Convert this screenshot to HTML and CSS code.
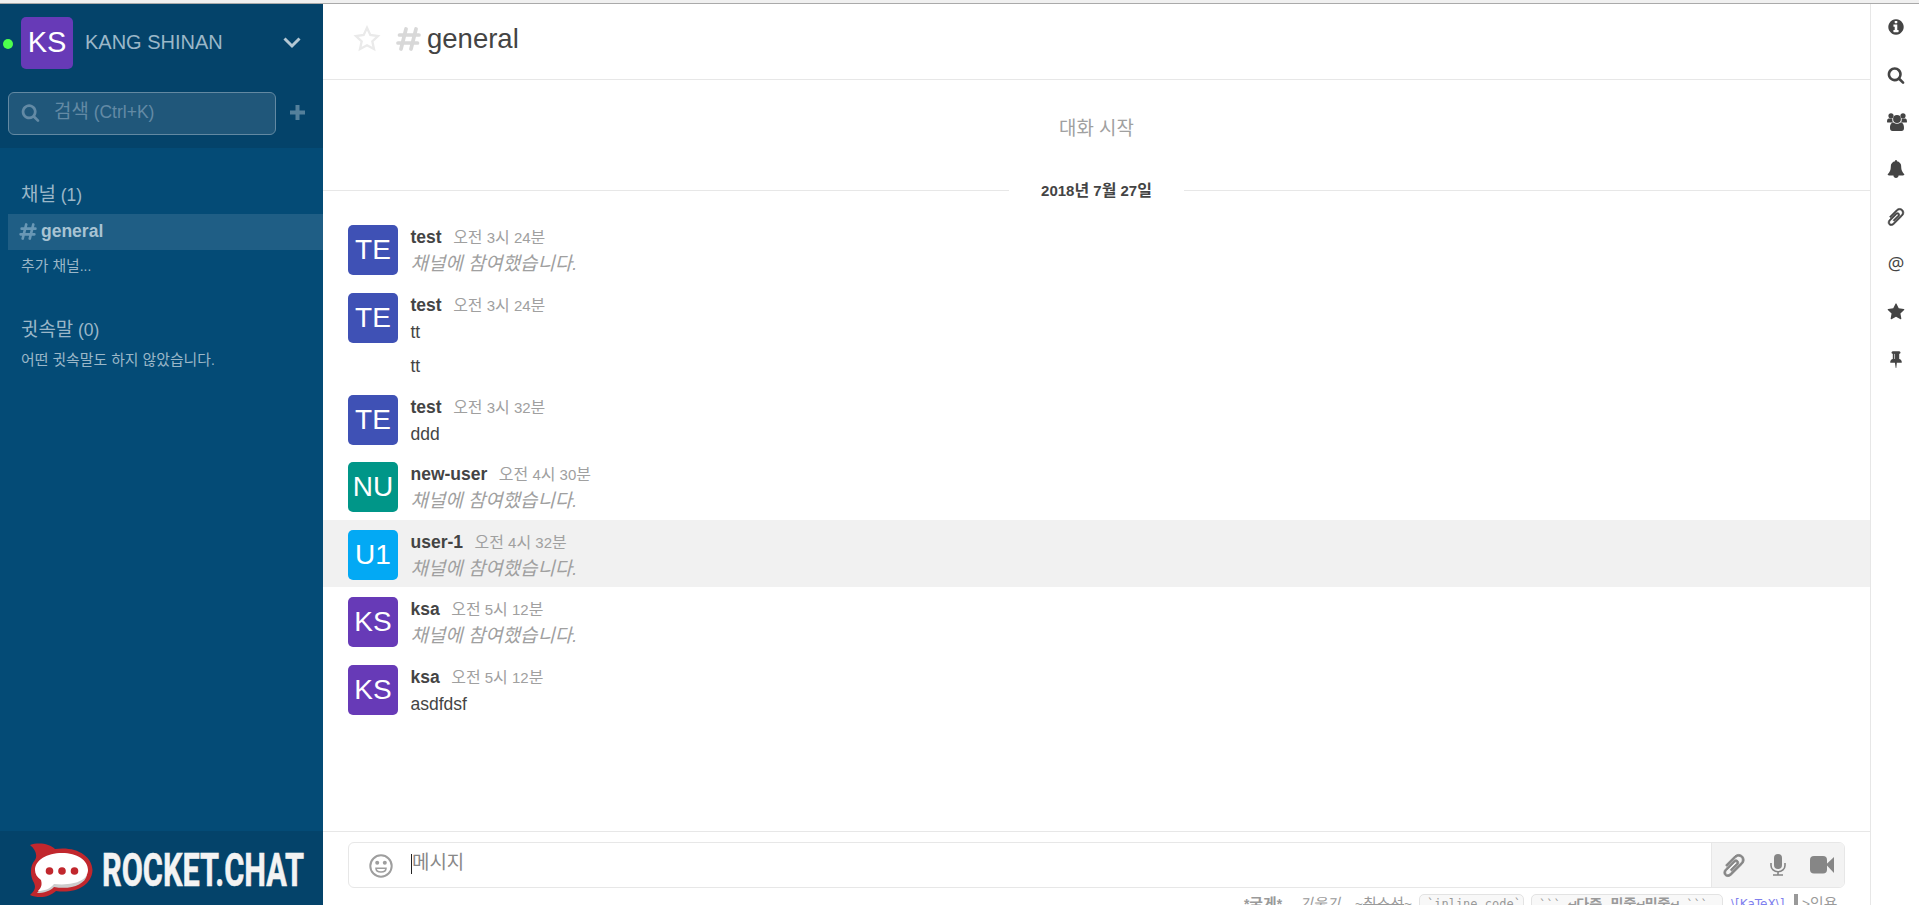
FILE: index.html
```html
<!DOCTYPE html>
<html lang="ko">
<head>
    <meta charset="UTF-8">
    <meta name="viewport" content="width=device-width, initial-scale=1.0">
    <title>general</title>
    <link rel="stylesheet" href="styles.css">
</head>
<body>
    <!-- shared icons -->
    <svg class="defs" width="0" height="0">
        <symbol id="icon-search" viewBox="0 0 1792 1792"><path d="M1216 832q0-185-131.5-316.5t-316.5-131.5-316.5 131.5-131.5 316.5 131.5 316.5 316.5 131.5 316.5-131.5 131.5-316.5zm512 832q0 52-38 90t-90 38q-54 0-90-38l-343-342q-179 124-399 124-143 0-273.5-55.5t-225-150-150-225-55.5-273.5 55.5-273.5 150-225 225-150 273.5-55.5 273.5 55.5 225 150 150 225 55.5 273.5q0 220-124 399l343 343q37 37 37 90z"/></symbol>
        <symbol id="icon-clip" viewBox="0 0 1792 1792"><path stroke="currentColor" stroke-width="60" transform="translate(1792 0) scale(-1 1)" d="M1596 1385q0 117-79 196t-196 79q-135 0-235-100l-777-776q-113-115-113-271 0-159 110-270t269-111q158 0 273 113l605 606q10 10 10 22 0 16-30.5 46.5t-46.5 30.5q-13 0-23-10l-606-607q-79-77-181-77-106 0-179 75t-73 181q0 105 76 181l776 777q63 63 145 63 64 0 106-42t42-106q0-82-63-145l-581-581q-26-24-60-24-29 0-48 19t-19 48q0 32 25 59l410 410q10 10 10 22 0 16-31 47t-47 31q-12 0-22-10l-410-410q-63-61-63-149 0-82 57-139t139-57q88 0 149 63l581 581q100 98 100 235z"/></symbol>
        <symbol id="icon-hash" viewBox="0 0 25 24"><path d="M10 2L5 22M20 2L15 22M3.5 8H23M2 16H21.500" fill="none" stroke="currentColor" stroke-width="3.7" stroke-linecap="round"/></symbol>
    </svg>

    <div class="top-strip"></div>
    <div class="app">
        <aside class="sidebar">
            <div class="side-header">
                <div class="account">
                    <span class="status"></span>
                    <span class="avatar avatar-me">KS</span>
                    <span class="account-name">KANG SHINAN</span>
                    <svg class="chevron" viewBox="0 0 18 12"><path d="M1.500 1.500L9 9L16.500 1.500" fill="none" stroke="currentColor" stroke-width="3"/></svg>
                </div>
                <div class="search-row">
                    <div class="search-box">
                        <svg class="search-icon"><use href="#icon-search"/></svg>
                        <span><span class="ko">검색</span> (Ctrl+K)</span>
                    </div>
                    <svg class="plus" viewBox="0 0 15 15"><path d="M5.500 0h4v5.500H15v4H9.500V15h-4V9.500H0v-4h5.500z"/></svg>
                </div>
            </div>
            <div class="rooms">
                <h3><span class="ko">채널</span> (1)</h3>
                <a class="room"><svg class="room-hash"><use href="#icon-hash"/></svg>general</a>
                <p class="more"><span class="ko">추가 채널</span>...</p>
                <h3 class="direct"><span class="ko">귓속말</span> (0)</h3>
                <p class="empty"><span class="ko">어떤 귓속말도 하지 않았습니다</span>.</p>
            </div>
            <div class="side-footer">
                <svg class="logo" viewBox="0 0 280 56">
                    <path fill="#c1272d" d="M0 2C9-1 20 1 25 6C45 3 62 12 62.500 27C62 43 44 51 26 48C20 54 9 56 0 52C6 47 6 43 3 38C0 32 0 22 5 17C8 12 5 6 0 2Z"/>
                    <path fill="#ccc" d="M15 40L7 50C14 50 20 48 24 44C40 47 55 42 57 32Z"/>
                    <path fill="#fff" d="M32 10C47 10 58 17 58 27C58 37 45 43 24 41C20 46 14 48 8 48C12 44 12 41 11 37C7 34 5 31 5 27C5 17 17 10 32 10Z"/>
                    <circle cx="19.500" cy="28" r="3.8" fill="#c1272d"/><circle cx="32" cy="28" r="3.800" fill="#c1272d"/><circle cx="44.500" cy="28" r="3.800" fill="#c1272d"/>
                    <text class="logo-text" x="72" y="43" textLength="202" lengthAdjust="spacingAndGlyphs">ROCKET.CHAT</text>
                </svg>
            </div>
        </aside>

        <main class="main">
            <header class="room-header">
                <svg class="fav" viewBox="0 0 28 27"><path d="M14 2.800L17.300 10L25 11L19.300 16.300L21 24L14 20.300L7 24L8.700 16.300L3 11L10.700 10Z" fill="none" stroke="currentColor" stroke-width="2.300"/></svg>
                <svg class="title-hash"><use href="#icon-hash"/></svg>
                <h1>general</h1>
            </header>

            <section class="messages">
                <div class="start"><span class="ko">대화 시작</span></div>
                <div class="day"><span class="day-text">2018<span class="ko">년</span> 7<span class="ko">월</span> 27<span class="ko">일</span></span></div>
                <div class="message">
                    <span class="avatar te">TE</span>
                    <div class="content">
                        <div class="info"><b>test</b><time><span class="ko">오전</span> 3<span class="ko">시</span> 24<span class="ko">분</span></time></div>
                        <div class="body system"><span class="ko">채널에 참여했습니다</span>.</div>
                    </div>
                </div>
                <div class="message">
                    <span class="avatar te">TE</span>
                    <div class="content">
                        <div class="info"><b>test</b><time><span class="ko">오전</span> 3<span class="ko">시</span> 24<span class="ko">분</span></time></div>
                        <div class="body">tt</div>
                    </div>
                </div>
                <div class="message sequential">
                    <div class="body">tt</div>
                </div>
                <div class="message">
                    <span class="avatar te">TE</span>
                    <div class="content">
                        <div class="info"><b>test</b><time><span class="ko">오전</span> 3<span class="ko">시</span> 32<span class="ko">분</span></time></div>
                        <div class="body">ddd</div>
                    </div>
                </div>
                <div class="message">
                    <span class="avatar nu">NU</span>
                    <div class="content">
                        <div class="info"><b>new-user</b><time><span class="ko">오전</span> 4<span class="ko">시</span> 30<span class="ko">분</span></time></div>
                        <div class="body system"><span class="ko">채널에 참여했습니다</span>.</div>
                    </div>
                </div>
                <div class="message hover">
                    <span class="avatar u1">U1</span>
                    <div class="content">
                        <div class="info"><b>user-1</b><time><span class="ko">오전</span> 4<span class="ko">시</span> 32<span class="ko">분</span></time></div>
                        <div class="body system"><span class="ko">채널에 참여했습니다</span>.</div>
                    </div>
                </div>
                <div class="message">
                    <span class="avatar ks">KS</span>
                    <div class="content">
                        <div class="info"><b>ksa</b><time><span class="ko">오전</span> 5<span class="ko">시</span> 12<span class="ko">분</span></time></div>
                        <div class="body system"><span class="ko">채널에 참여했습니다</span>.</div>
                    </div>
                </div>
                <div class="message">
                    <span class="avatar ks">KS</span>
                    <div class="content">
                        <div class="info"><b>ksa</b><time><span class="ko">오전</span> 5<span class="ko">시</span> 12<span class="ko">분</span></time></div>
                        <div class="body">asdfdsf</div>
                    </div>
                </div>
            </section>

            <footer class="composer">
                <div class="input-box">
                    <svg class="smile" viewBox="0 0 24 24"><circle cx="12" cy="12" r="10.700" fill="none" stroke="currentColor" stroke-width="2"/><circle cx="8.200" cy="8.700" r="2"/><circle cx="15.800" cy="8.700" r="2"/><path d="M7 14.200h10c0 5-10 5-10 0z" fill="none" stroke="currentColor" stroke-width="1.600"/></svg>
                    <div class="placeholder"><span class="caret"></span><span class="ko">메시지</span></div>
                    <div class="actions">
                        <svg class="act-clip"><use href="#icon-clip"/></svg>
                        <svg class="act-mic" viewBox="0 0 16 22"><rect x="4" y="0" width="8" height="15" rx="4"/><path d="M1 9v2.500a7 6.300 0 0 0 14 0V9M8 18v3M3 21h10" fill="none" stroke="currentColor" stroke-width="1.600"/></svg>
                        <svg class="act-video" viewBox="0 0 24 18"><rect width="17" height="17.500" rx="4"/><path d="M16 8.500L24 1v16z"/></svg>
                    </div>
                </div>
                <div class="hints">
                    <b class="hint-bold">*<span class="ko">굵게</span>*</b>
                    <i class="hint-italic ko">기울기</i>
                    <span class="hint-strike">~<s class="ko">취소선</s>~</span>
                    <code class="hint-inline">`inline code`</code>
                    <code class="hint-multi">``` <b><span class="ret">↵</span><span class="ko">다중 밑줄</span><span class="ret">↵</span><span class="ko">밑줄</span><span class="ret">↵</span></b> ```</code>
                    <span class="hint-katex">\[KaTeX\]</span>
                    <span class="hint-quote">&gt;<span class="ko">인용</span></span>
                </div>
            </footer>
        </main>

        <nav class="toolbar">
            <a><svg viewBox="0 0 1792 1792"><path d="M1152 1376v-160q0-14-9-23t-23-9h-96v-512q0-14-9-23t-23-9h-320q-14 0-23 9t-9 23v160q0 14 9 23t23 9h96v320h-96q-14 0-23 9t-9 23v160q0 14 9 23t23 9h448q14 0 23-9t9-23zm-128-896v-160q0-14-9-23t-23-9h-192q-14 0-23 9t-9 23v160q0 14 9 23t23 9h192q14 0 23-9t9-23zm640 416q0 209-103 385.500t-279.500 279.500-385.500 103-385.500-103-279.500-279.500-103-385.500 103-385.500 279.500-279.500 385.500-103 385.500 103 279.500 279.500 103 385.500z"/></svg></a>
            <a><svg><use href="#icon-search"/></svg></a>
            <a><svg class="users" viewBox="0 0 20 18"><circle cx="4" cy="2.800" r="2.600"/><circle cx="16" cy="2.800" r="2.600"/><path d="M0 9c0-3 1-4 2.500-3.500h3C5 7 5.500 8.500 6 9.500H1.500Q0 9.500 0 9zM20 9c0-3-1-4-2.500-3.500h-3c.5 1.500 0 3-.5 4h4.500q1.500 0 1.500-.5z"/><circle cx="10" cy="6" r="3.900"/><path d="M3 15c0-4 1.500-5.500 3.500-5.500 2 1.600 5 1.600 7 0 2 0 3.500 1.500 3.500 5.500q0 3-2.500 3h-9Q3 18 3 15z"/></svg></a>
            <a><svg viewBox="0 0 1792 1792"><path d="M1664 1408q0 52-38 90t-90 38h-448q0 106-75 181t-181 75-181-75-75-181h-448q-52 0-90-38t-38-90q50-42 91-88t85-119.500 74.500-158.500 50-206 19.500-260q0-152 117-282.500t307-158.500q-8-19-8-39 0-40 28-68t68-28 68 28 28 68q0 20-8 39 190 28 307 158.500t117 282.500q0 139 19.500 260t50 206 74.500 158.500 85 119.500 91 88z" transform="translate(64 0)"/></svg></a>
            <a><svg class="tool-clip"><use href="#icon-clip"/></svg></a>
            <a class="at">@</a>
            <a><svg viewBox="0 0 1792 1792"><path d="M1728 647q0 22-26 48l-363 354 86 500q1 7 1 20 0 21-10.500 35.500t-30.500 14.500q-19 0-40-12l-449-236-449 236q-22 12-40 12-21 0-31.500-14.500t-10.500-35.500q0-6 2-20l86-500-364-354q-25-27-25-48 0-37 56-46l502-73 225-455q19-41 49-41t49 41l225 455 502 73q56 9 56 46z"/></svg></a>
            <a><svg viewBox="0 0 1792 1792"><path d="M800 864v-448q0-14-9-23t-23-9-23 9-9 23v448q0 14 9 23t23 9 23-9 9-23zm672 352q0 26-19 45t-45 19h-429l-51 483q-2 12-10.500 20.500t-20.500 8.500h-1q-27 0-32-27l-76-485h-404q-26 0-45-19t-19-45q0-123 78.500-221.500t177.500-98.500v-512q-52 0-90-38t-38-90 38-90 90-38h640q52 0 90 38t38 90-38 90-90 38v512q99 0 177.500 98.500t78.500 221.500z"/></svg></a>
        </nav>
    </div>
</body>
</html>
```
FILE: styles.css
```css
* {
    box-sizing: border-box;
}

body {
    margin: 0;
    height: 905px;
    overflow: hidden;
    display: flex;
    flex-direction: column;
    font-family: "Liberation Sans", Arial, "Noto Sans CJK KR", sans-serif;
    font-size: 17.5px;
    color: #444;
    background: #fff;
}

h1, h3, p {
    margin: 0;
    font-weight: normal;
}

svg {
    display: block;
    flex: none;
    fill: currentColor;
}

.defs {
    position: absolute;
}

/* hangul is drawn a bit wider than the latin text */
.ko {
    font-size: 1.08em;
}

.info .ko,
.day .ko {
    font-size: 1.065em;
}

.top-strip {
    flex: none;
    height: 4px;
    background: #f0f0f0;
    border-bottom: 1px solid #aaa;
}

.app {
    flex: 1;
    min-height: 0;
    display: flex;
}

.avatar {
    flex: none;
    width: 50px;
    height: 50px;
    border-radius: 5px;
    color: #fff;
    font-size: 28px;
    line-height: 50px;
    text-align: center;
}

.te { background: #3f51b5; }
.nu { background: #009688; }
.u1 { background: #03a9f4; }
.ks { background: #673ab7; }

/* sidebar */
.sidebar {
    flex: none;
    width: 323px;
    display: flex;
    flex-direction: column;
    background: #044b76;
    color: #9bb7c8;
}

.side-header {
    height: 144px;
    background: #04436a;
}

.account {
    height: 78px;
    padding: 0 22px 0 3px;
    display: flex;
    align-items: center;
}

.status {
    width: 10px;
    height: 10px;
    border-radius: 50%;
    background: #4dff4d;
    margin-top: 2px;
}

.avatar-me {
    width: 52px;
    height: 52px;
    line-height: 51px;
    margin: 0 12px 0 8px;
    background: #673ab7;
    font-size: 29px;
}

.account-name {
    flex: 1;
    margin-top: -1px;
    font-size: 20px;
}

.chevron {
    width: 18px;
    height: 12px;
    color: #b4c7d3;
}

.search-row {
    display: flex;
    align-items: center;
    margin-top: 10px;
    padding: 0 18px 0 8px;
    color: #638aa5;
}

.search-box {
    width: 268px;
    height: 43px;
    margin-right: 14px;
    padding: 0 0 3px 12px;
    display: flex;
    align-items: center;
    border: 1px solid #6389a2;
    border-radius: 6px;
    background: #20577a;
    line-height: 24px;
}

.search-icon {
    width: 19px;
    height: 19px;
    margin: 1px 14px 0 0;
}

.plus {
    width: 15px;
    height: 15px;
    margin-top: -3px;
    color: #54809b;
}

.rooms {
    flex: 1;
    padding: 35px 0 0 8px;
}

.rooms h3,
.rooms p {
    padding-left: 13px;
}

.rooms h3 {
    height: 31px;
    font-size: 17.5px;
    line-height: 24px;
}

.room {
    display: flex;
    align-items: center;
    height: 36px;
    padding: 0 0 1px 11px;
    background: #1f5e85;
    color: #a8c3d3;
    font-weight: bold;
}

.room-hash {
    width: 18px;
    height: 17px;
    margin-right: 4px;
    color: #6997b5;
}

.rooms p {
    font-size: 13.75px;
    line-height: 20px;
}

.more {
    margin-top: 6px;
}

.rooms .direct {
    margin-top: 41px;
}

.rooms .empty {
    margin-top: 1px;
}

.side-footer {
    height: 74px;
    padding: 12px 0 0 30px;
    background: #04436a;
}

.logo {
    width: 280px;
    height: 56px;
}

.logo-text {
    font-family: Roboto, sans-serif;
    font-weight: bold;
    font-size: 46px;
    fill: #f3f3f3;
    stroke: #f3f3f3;
    stroke-width: .6px;
}

/* room */
.main {
    flex: 1;
    min-width: 0;
    display: flex;
    flex-direction: column;
}

.room-header {
    flex: none;
    height: 76px;
    padding: 0 0 6px 30px;
    display: flex;
    align-items: center;
    border-bottom: 1px solid #e7e7e7;
}

.room-header h1 {
    font-size: 27.5px;
    line-height: 32px;
}

.fav {
    width: 28px;
    height: 27px;
    color: #eaeaea;
}

.title-hash {
    width: 25px;
    height: 24px;
    margin: 1px 6px 0 15px;
    color: #d8d8d8;
}

.messages {
    flex: 1;
    min-height: 0;
}

.start {
    height: 98px;
    padding-top: 36px;
    line-height: 26px;
    text-align: center;
    color: #a0a0a0;
}

.day {
    height: 24px;
    display: flex;
    align-items: center;
    font-size: 15px;
    font-weight: bold;
    line-height: 24px;
}

.day::before,
.day::after {
    content: "";
    flex: 1;
    height: 1px;
    background: #e7e7e7;
}

.day-text {
    width: 175px;
    padding-top: 1px;
    text-align: center;
}

.day + .message {
    margin-top: 13px;
}

.message {
    display: flex;
    height: 67.5px;
    padding: 10px 25px 0;
}

.hover {
    background: #f1f1f1;
}

.content {
    padding-left: 12.5px;
}

.info {
    height: 25px;
    line-height: 24px;
}

.info time {
    margin-left: 11.5px;
    font-size: 15px;
    color: #a0a0a0;
}

.body {
    line-height: 29px;
}

.system {
    line-height: 27px;
    font-style: italic;
    color: #a0a0a0;
}

.sequential {
    height: 34.5px;
    padding: 2px 25px 0 87.5px;
}

/* message box */
.composer {
    flex: none;
    height: 74px;
    padding: 10px 25px 0;
    border-top: 1px solid #e7e7e7;
    overflow: hidden;
}

.input-box {
    height: 46px;
    display: flex;
    border: 1px solid #e7e7e7;
    border-radius: 6px;
    overflow: hidden;
}

.smile {
    width: 24px;
    height: 24px;
    margin: 11px 18px 0 20px;
    color: #9e9e9e;
}

.placeholder {
    flex: 1;
    display: flex;
    padding-top: 7px;
    line-height: 26px;
    color: #888;
}

.caret {
    width: 1px;
    height: 20px;
    margin-top: 4px;
    background: #222;
}

.actions {
    width: 133px;
    display: flex;
    align-items: center;
    border-left: 1px solid #e7e7e7;
    background: #f3f3f3;
    color: #868686;
}

.act-clip {
    width: 26px;
    height: 27px;
    margin-left: 9px;
}

.act-mic {
    width: 16px;
    height: 22px;
    margin: 0 24px 0 23px;
}

.act-video {
    width: 24px;
    height: 18px;
}

.hints {
    display: flex;
    height: 26px;
    margin-top: 6px;
    padding-left: 896px;
    font-size: 13.75px;
    line-height: 20px;
    white-space: nowrap;
    color: #9a9a9a;
}

.hints > * {
    flex: none;
}

.hint-bold {
    width: 55px;
}

.hint-italic {
    width: 56px;
}

.hint-strike {
    width: 64px;
}

.hints code {
    height: 26px;
    padding: 0 7px;
    border: 1px solid #e3e3e3;
    border-radius: 5px;
    background: #f8f8f8;
    font-family: "DejaVu Sans Mono", "Noto Sans CJK KR", monospace;
    font-size: 12px;
    line-height: 18px;
    overflow: hidden;
}

.hint-inline {
    width: 105px;
    margin-right: 7px;
}

.hint-multi {
    width: 192px;
    margin-right: 8px;
}

.hints .hint-multi .ko {
    font-size: 14px;
}

.hint-multi .ret {
    font-size: 14px;
    line-height: 0;
    vertical-align: 2px;
}

.hint-katex {
    width: 63px;
    color: #8080ee;
    font-family: "DejaVu Sans", sans-serif;
    font-size: 12px;
    line-height: 20px;
}

.hint-quote {
    padding-left: 4px;
    border-left: 4px solid #999;
}

/* tab bar */
.toolbar {
    flex: none;
    width: 49px;
    border-left: 1px solid #e7e7e7;
}

.toolbar a {
    display: flex;
    align-items: center;
    justify-content: center;
    height: 47.4px;
    padding: 0 0 1px 2px;
    color: #444;
}

.toolbar svg {
    width: 18px;
    height: 18px;
}

.toolbar .users {
    width: 20px;
    margin-left: 2px;
}

.toolbar .tool-clip {
    width: 20px;
    height: 20px;
}

.toolbar .at {
    padding-bottom: 4px;
    font-family: "Open Sans", sans-serif;
    font-size: 18.5px;
}
```
